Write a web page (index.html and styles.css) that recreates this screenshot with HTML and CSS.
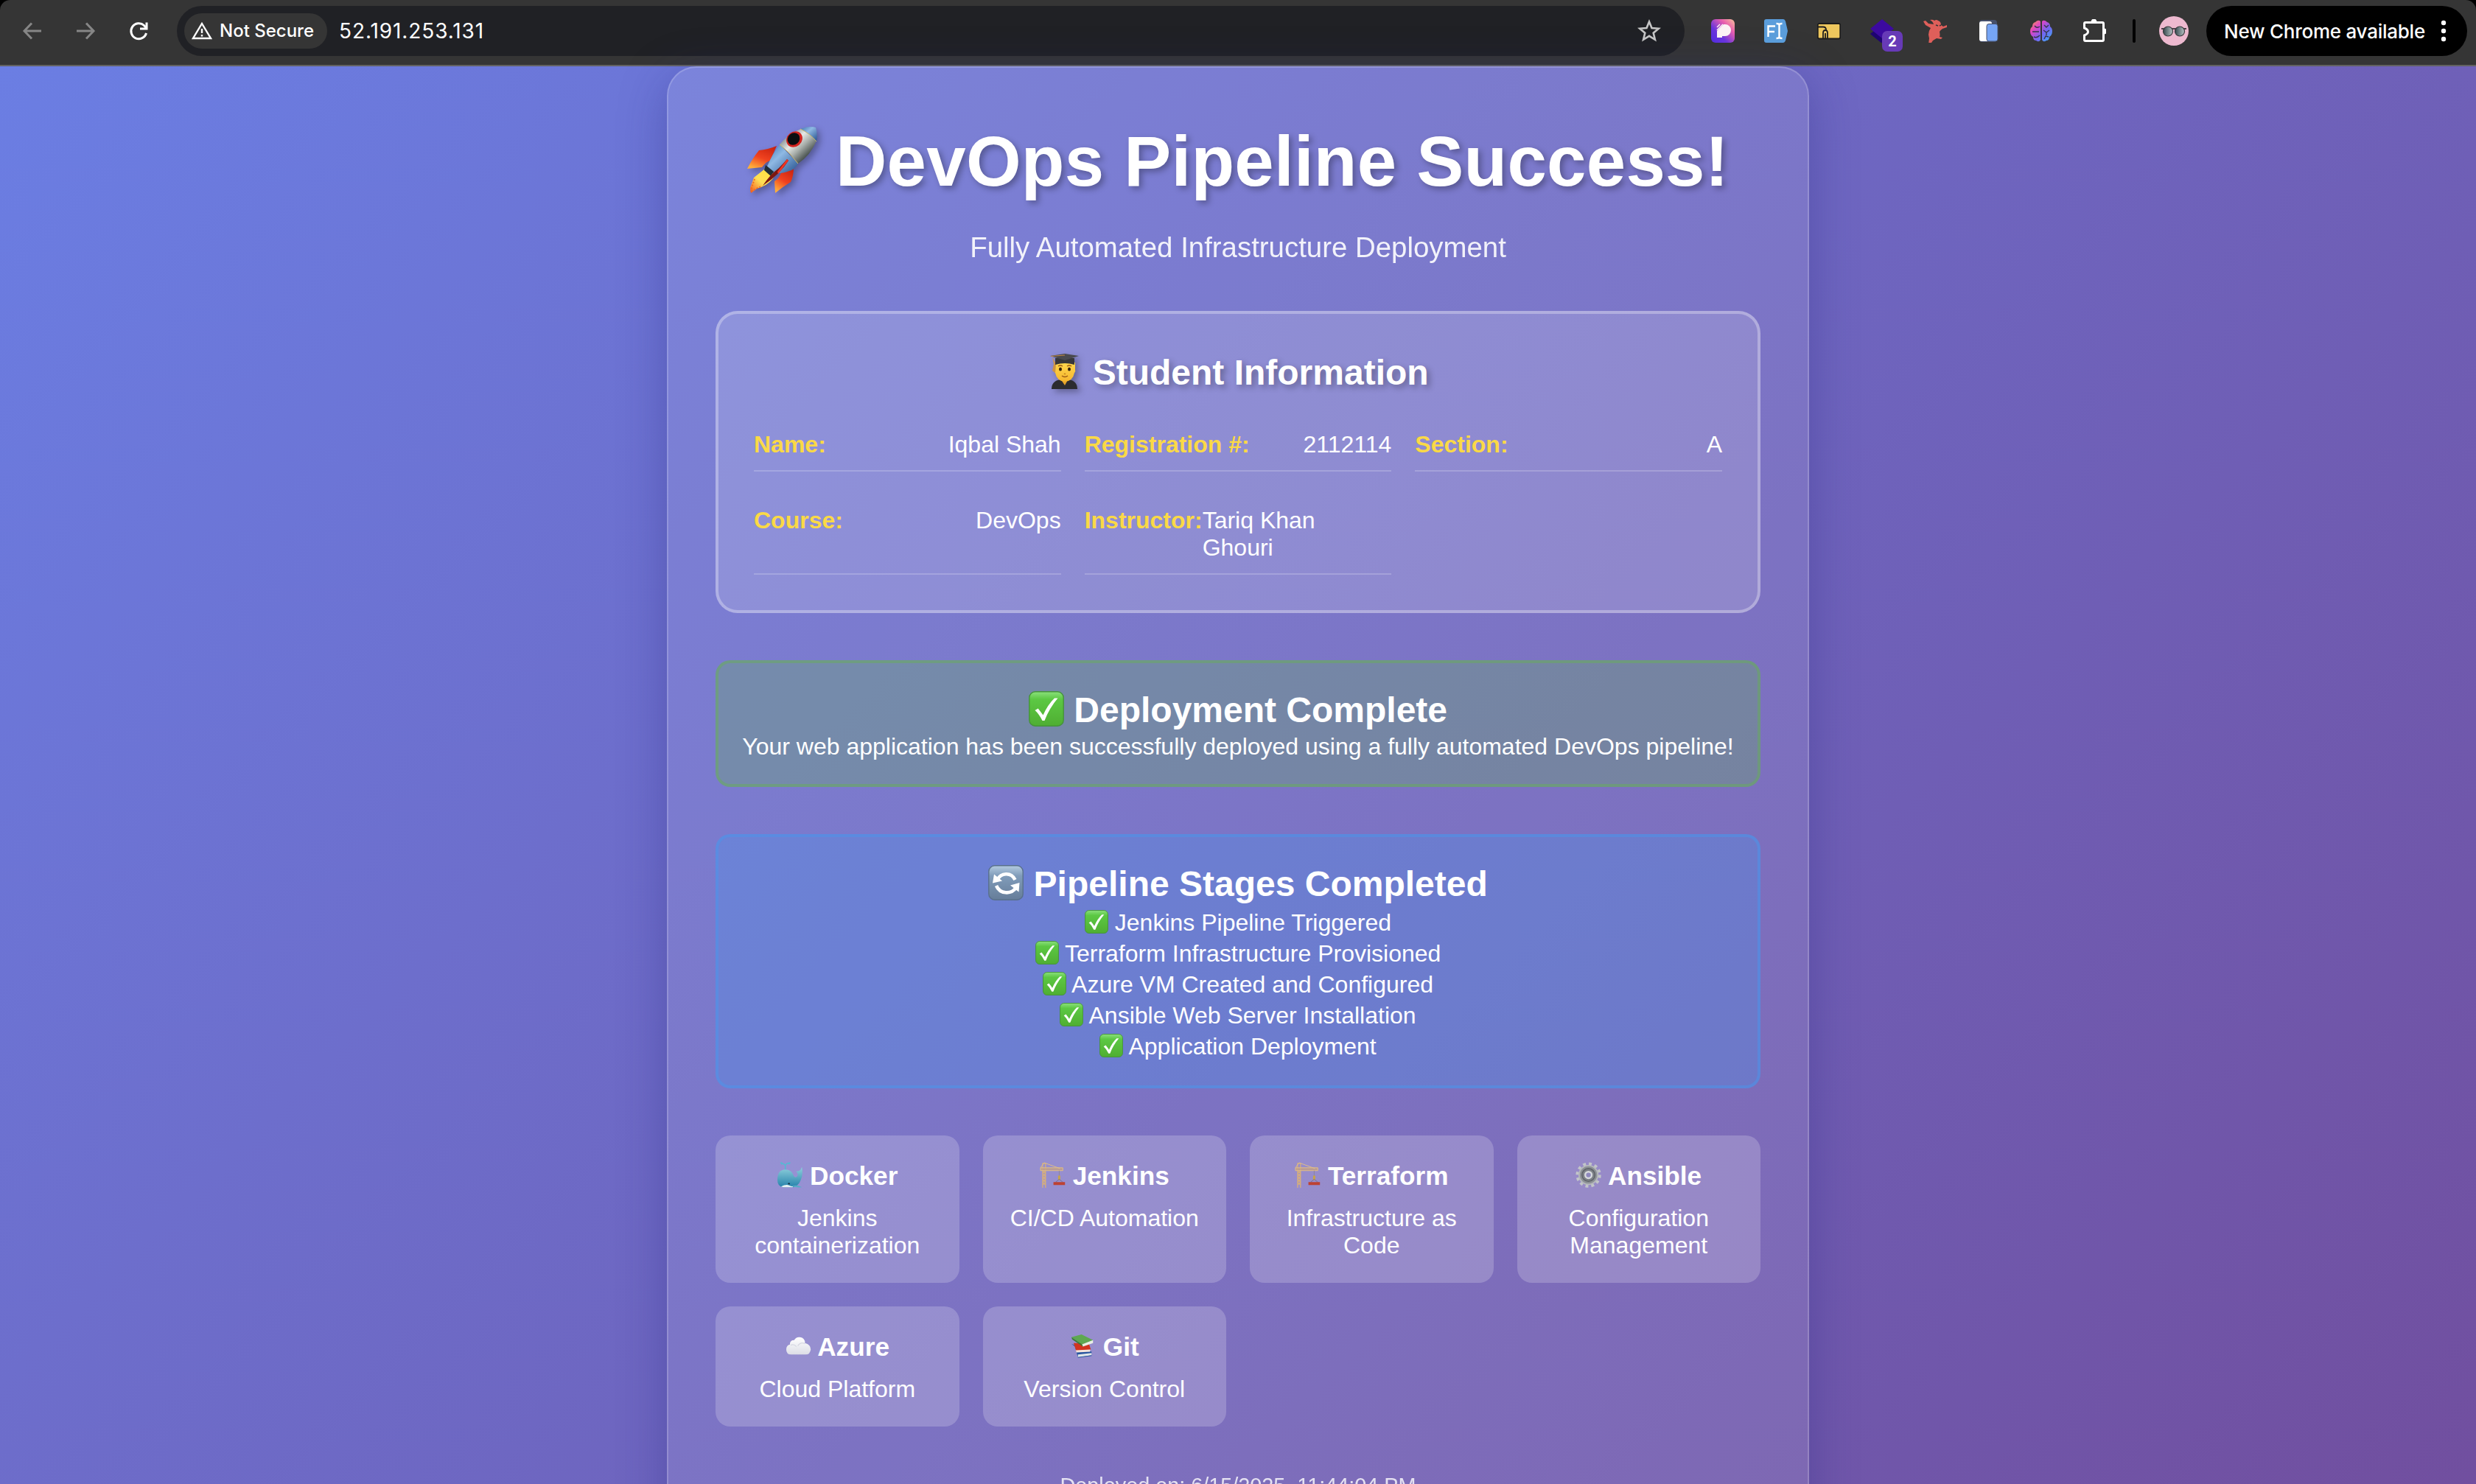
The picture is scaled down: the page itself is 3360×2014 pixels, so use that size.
FILE: index.html
```html
<!DOCTYPE html>
<html lang="en">
<head>
<meta charset="utf-8">
<title>DevOps Pipeline Success</title>
<link rel="stylesheet" href="styles.css">
</head>
<body>
<svg class="defs" aria-hidden="true">
  <defs>
    <linearGradient id="g-check" x1="0" y1="0" x2="0" y2="1"><stop offset="0" stop-color="#8be07c"/><stop offset=".22" stop-color="#5cc843"/><stop offset="1" stop-color="#4fae32"/></linearGradient>
    <linearGradient id="g-sync" x1="0" y1="0" x2="0" y2="1"><stop offset="0" stop-color="#b4cbe0"/><stop offset=".3" stop-color="#809cba"/><stop offset="1" stop-color="#667d99"/></linearGradient>
    <linearGradient id="g-hull" x1=".2" y1=".2" x2=".75" y2=".75"><stop offset="0" stop-color="#8e9699"/><stop offset=".35" stop-color="#e6e9e6"/><stop offset=".65" stop-color="#a9afab"/><stop offset="1" stop-color="#4e5754"/></linearGradient>
    <linearGradient id="g-blue" x1="0" y1="0" x2="1" y2="1"><stop offset="0" stop-color="#3a73ae"/><stop offset=".4" stop-color="#8fb9e4"/><stop offset="1" stop-color="#234f8c"/></linearGradient>
    <linearGradient id="g-fin" x1=".8" y1="0" x2=".3" y2="1"><stop offset="0" stop-color="#c8220f"/><stop offset=".55" stop-color="#f0421f"/><stop offset="1" stop-color="#ffae3a"/></linearGradient>
    <linearGradient id="g-flame" x1="1" y1="0" x2="0" y2="1"><stop offset="0" stop-color="#ffe23c"/><stop offset=".55" stop-color="#ffdf55"/><stop offset="1" stop-color="#f0501c"/></linearGradient>
    <linearGradient id="g-whale" x1="0" y1="0" x2="0" y2="1"><stop offset="0" stop-color="#8fd0dc"/><stop offset="1" stop-color="#2682ab"/></linearGradient>
    <linearGradient id="g-cloud" x1="0" y1="0" x2="0" y2="1"><stop offset="0" stop-color="#ffffff"/><stop offset="1" stop-color="#dcdde6"/></linearGradient>
    <linearGradient id="g-face" x1="0" y1="0" x2="0" y2="1"><stop offset="0" stop-color="#ffd84d"/><stop offset="1" stop-color="#f5b52e"/></linearGradient>
    <linearGradient id="g-p" x1="0" y1="1" x2="1" y2="0"><stop offset="0" stop-color="#4f2ce0"/><stop offset=".35" stop-color="#6a35dc"/><stop offset=".7" stop-color="#e95fae"/><stop offset="1" stop-color="#f7c39a"/></linearGradient>
    <linearGradient id="g-brain" x1="0" y1="0" x2="1" y2="1"><stop offset="0" stop-color="#f7a63c"/><stop offset=".3" stop-color="#e044c4"/><stop offset=".6" stop-color="#7464f0"/><stop offset="1" stop-color="#36b4f4"/></linearGradient>
    <linearGradient id="g-lens" x1="0" y1="0" x2="1" y2="0"><stop offset="0" stop-color="#33474c"/><stop offset="1" stop-color="#b9c4c6"/></linearGradient>

    <symbol id="check" viewBox="0 0 48 48">
      <rect x=".8" y=".8" width="46.4" height="46.4" rx="8" fill="url(#g-check)" stroke="#45933a" stroke-width="1.4"/>
      <path d="M8.500 26l4.200-2.600q4 5 6.800 9.200Q26 18 35 9.500h4.500Q28 23 21.500 40h-3Q14 31 8.500 26z" fill="#fff"/>
    </symbol>
    <symbol id="sync" viewBox="0 0 48 48">
      <rect x=".8" y=".8" width="46.4" height="46.4" rx="8" fill="url(#g-sync)" stroke="#59708c" stroke-width="1.4"/>
      <path d="M12.500 20C17 10.500 31 9 36.500 20M11 28c5 11.500 20 12.500 27 2.500" fill="none" stroke="#fff" stroke-width="4.600"/>
      <path d="M8 12.500L6 24.500l13-3zM42.500 24L30 27.500l11.500 9z" fill="#fff"/>
    </symbol>
    <symbol id="rocket" viewBox="0 0 96 96">
      <path d="M23 63L38 70Q32 82 19 87L13 89 5 95 4 88 9 74z" fill="url(#g-flame)"/>
      <path d="M10 76L6 88 5 94 12 89 19 86" fill="none" stroke="#f06a22" stroke-width="1.800" stroke-dasharray="2 2"/>
      <path d="M40 31Q28 36 16 37Q7 48 0 62L20 60Q26 52 31 51z" fill="url(#g-fin)"/>
      <path d="M63 60Q63 72 59 80Q49 86 38 95L37 79Q45 74 46 66z" fill="url(#g-fin)"/>
      <path d="M44 29L69 55Q65 63 57 65Q46 69 38 68L27 59Q34 42 44 29z" fill="url(#g-blue)"/>
      <path d="M25 57l11 9-4 6-9-8z" fill="#222d35"/>
      <path d="M44 29Q56 14 73 8Q83 8 94 24Q86 44 69 55Q58 41 44 29z" fill="url(#g-hull)"/>
      <path d="M72 8Q84 3 93 6Q96 15 94 25Q85 14 72 8z" fill="url(#g-blue)"/>
      <path d="M44 29Q57 39 69 55M72 8Q85 14 94 25" fill="none" stroke="#c9b56a" stroke-width="1"/>
      <ellipse cx="64" cy="22" rx="11.500" ry="10" transform="rotate(-40 64 22)" fill="#d2231f"/>
      <ellipse cx="63" cy="21.500" rx="8.800" ry="7.800" transform="rotate(-40 63 21.500)" fill="#0a0d10"/>
      <path d="M54 49L56 51Q44 70 21 85Q31 70 43 61Q49 55 54 49z" fill="#7d160f"/>
      <path d="M54 49L56 51 42 69 41 66z" fill="#f03524"/>
    </symbol>
    <symbol id="student" viewBox="0 0 48 48">
      <path d="M6 48q0-11 12-13h11q12 2 12 13z" fill="#2c2c30"/>
      <path d="M18 34h11l-5 9z" fill="#e5a42b"/>
      <path d="M9 12h29v10q1 2-1 4-2 11-13 12-11-1-13-12-3-2-2-5z" fill="url(#g-face)"/>
      <path d="M7 4l2 10-2 9 4 3 1-12z" fill="#cc9347"/>
      <path d="M11 6h26v9q-13-4-26 0z" fill="#37373b"/>
      <path d="M4 3L24 0l19 3-19 6z" fill="#4a4a4e"/>
      <path d="M5 3.500L24 2" stroke="#bf8745" stroke-width="1.200"/>
      <ellipse cx="18" cy="21" rx="2" ry="2.600" fill="#33200c"/><ellipse cx="30" cy="21" rx="2" ry="2.600" fill="#33200c"/>
      <path d="M15 17q3-2 6 0M27 17q3-2 6 0M20 30q4 3 8 0" fill="none" stroke="#9b5a15" stroke-width="1.400"/>
      <path d="M23 27q1 1 2 0" fill="none" stroke="#c07a1a" stroke-width="1.500"/>
    </symbol>
    <symbol id="whale" viewBox="0 0 36 36">
      <path d="M12 11V5M12 5Q10 1 6 3M12 5Q14 0 18 3M8 1.500l-3-.5M16 1.500l3-.5" fill="none" stroke="#55b9d2" stroke-width="1.600"/>
      <path d="M1 25Q1 10.500 12 10.500Q21 10.500 24 20Q27 23 29 19Q30 16 27 13Q31 13 33 11Q34 9 35 7Q37 19 33 26Q30 33 23 35H9Q1 34 1 25z" fill="url(#g-whale)"/>
      <path d="M6 34Q12 31 16 32Q20 34 23 34L22 35H9z" fill="#e6f1f2"/>
      <path d="M21 33.500q7-2.500 14 1.500-8 1-14-1.500z" fill="#56acc8"/><circle cx="17" cy="30" r="1.200" fill="#142d3b"/>
    </symbol>
    <symbol id="crane" viewBox="0 0 36 36">
      <path d="M4 36V2h4v34M4 12l4 4-4 4 4 4-4 4 4 4M8 12l-4 4 4 4-4 4 4 4-4 4" fill="none" stroke="#d6ae7c" stroke-width="1.300"/>
      <path d="M1 8h31v4H1zM6 1L1 8M6 1l22 8" fill="#c9a27c" fill-opacity=".7" stroke="#e0bd86" stroke-width="1"/>
      <path d="M27 12v11" stroke="#8d8798" stroke-width="1"/><path d="M25.500 19h3v6h-3z" fill="#c8a447"/>
      <path d="M22 28l5-4 5 4" fill="none" stroke="#77708c"/><path d="M19 28h16v4H19z" fill="#bd4233"/>
    </symbol>
    <symbol id="gear" viewBox="0 0 36 36">
      <circle cx="18" cy="18" r="15.300" fill="none" stroke="#c2c5c9" stroke-width="4.500" stroke-dasharray="4 4.010"/>
      <circle cx="18" cy="18" r="13" fill="#8c9095" stroke="#b5b8bc" stroke-width="2"/>
      <circle cx="18" cy="18" r="9" fill="#7c8086" stroke="#5e6268" stroke-width="1.500"/>
      <circle cx="18" cy="18" r="4.500" fill="#8e88bd" stroke="#d6d9dc" stroke-width="2.500"/>
    </symbol>
    <symbol id="cloud" viewBox="0 0 36 36">
      <path d="M8 30Q1 30 1 23Q1 17 6 16Q6 10 12 10Q15 5 20 6Q27 7 27 14Q35 16 35 23Q34 30 28 30z" fill="url(#g-cloud)"/>
      <path d="M7 17q5-2 8 2M17 18q4-6 10-3" fill="none" stroke="#d6d8e2" stroke-width="1.200"/>
    </symbol>
    <symbol id="books" viewBox="0 0 36 36">
      <path d="M2 15l5 4 4 15 19-3v-5z" fill="#27559f"/><path d="M11 30l19-2v3l-19 3z" fill="#dfe6e8"/><path d="M11 34l19-2.500" stroke="#27559f"/>
      <path d="M5 14l21 0 3 9-20 3z" fill="#d23420"/><path d="M8 24l20-1v3l-19 1z" fill="#f2e4dc"/>
      <path d="M2 6l14-4 16 8-15 6z" fill="#5ea851"/><path d="M16 16l16-6v4l-14 5z" fill="#e9efe5"/><path d="M2 6l15 10 1 3L3 9z" fill="#397c33"/>
    </symbol>
  </defs>
</svg>

<header class="toolbar">
  <nav class="nav">
    <svg class="nav-icon dim" viewBox="0 0 36 36"><path d="M30 18H8M17 7.500L7 18l10 10.500"/></svg>
    <svg class="nav-icon dim" viewBox="0 0 36 36"><path d="M6 18h22M19 7.500L29 18 19 28.500"/></svg>
    <svg class="nav-icon" viewBox="0 0 36 36"><path d="M28.500 21A10.500 10.500 0 1 1 25.500 10.500L28.500 14"/><path d="M29 6.500V15h-9"/></svg>
  </nav>
  <div class="omnibox">
    <div class="chip">
      <svg class="warn" viewBox="0 0 28 26"><path d="M14 3L26 23H2z" fill="none" stroke="#fff" stroke-width="2.400"/><path d="M14 10v6M14 18v2.600" stroke="#fff" stroke-width="2.400"/></svg>
      <span>Not Secure</span>
    </div>
    <span class="url">52.191.253.131</span>
    <svg class="star" viewBox="0 0 32 32"><path d="M16 3.500l3.500 8.600 9.300.7-7.100 6 2.200 9-7.900-4.900-7.900 4.900 2.200-9-7.100-6 9.300-.7z" fill="none" stroke="#c7c7c7" stroke-width="2.600"/></svg>
  </div>
  <div class="extensions">
    <div class="ext"><svg viewBox="0 0 32 32"><rect width="32" height="32" rx="6" fill="url(#g-p)"/><path d="M8 16L17 7h2a8 8 0 0 1 0 16h-4v2H8z" fill="#fbf3f5"/><path d="M8 11l4-4M8 15l8-8" stroke="#fbf3f5" stroke-width="1.500"/></svg></div>
    <div class="ext"><svg viewBox="0 0 32 32"><path d="M3 0h23q2 0 3 3l3 13-3 13q-1 3-3 3H3q-3 0-3-3V3q0-3 3-3z" fill="#5a9ddb"/><path d="M5.500 24V9.500H15M5.500 17H14M20.500 8v16M16.500 6q4 0 4 2 0-2 4-2M16.500 26q4 0 4-2 0 2 4 2" fill="none" stroke="#fff" stroke-width="2.400"/></svg></div>
    <div class="ext"><svg viewBox="0 0 32 32"><rect x=".8" y="6" width="30.400" height="20.500" rx="2" fill="#eec75d" stroke="#1d1d1d" stroke-width="1.800"/><path d="M1 10.500h7q4 0 4 4M8 26v-7q0-4 3-4t3 4v7M11 19v7" fill="none" stroke="#1d1d1d" stroke-width="1.800"/></svg></div>
    <div class="ext"><svg viewBox="0 0 32 32"><path d="M0 20l5-4 17 13-6 4z" fill="#1e0470"/><path d="M16 0l16 13-16 13L0 13z" fill="#3c0aa0"/></svg><span class="badge">2</span></div>
    <div class="ext"><svg viewBox="0 0 32 32"><path d="M0 3l3-1 4 4 7 1q-1-4-5-6 4-1 6 1 3-2 5 0 4 1 4 6l3 2 5-2v3l-6 2q-3 2-4 4 1 5 0 7l4 1-2 2-6-1-5 3-4 6-2-1 1-8-1-5q0-5 3-9L3 8z" fill="#df5f5a"/><path d="M17 8l3 1M22 9l2-1" stroke="#353535" stroke-width="1.600"/></svg></div>
    <div class="ext"><svg viewBox="0 0 32 32"><rect x="4" y="1" width="24" height="30" rx="4" fill="#46506b"/><rect x="4" y="3" width="17" height="27" rx="3" fill="#fff"/><rect x="14" y="6.500" width="15" height="23.500" rx="3" fill="#76a5f5" stroke="#46506b" stroke-width="1"/></svg></div>
    <div class="ext"><svg viewBox="0 0 32 32"><path d="M15 3v25q-2 4-6 1-4 0-4-5-4-2-4-8 0-4 3-6 0-5 4-6 4-4 7-1zM17 3v25q2 4 6 1 4 0 4-5 4-2 4-8 0-4-3-6 0-5-4-6-4-4-7-1z" fill="url(#g-brain)"/><path d="M7 9q3 4 7 1M4 17h9M6 24q4 2 8-2M20 8l3 3 3-3M19 15l4 3v4M23 18l4-3M20 27l2-4 4 1" fill="none" stroke="#34354a" stroke-width="1.400"/></svg></div>
    <div class="ext"><svg viewBox="0 0 32 32"><path d="M4 5.500h23q1.500 0 1.500 1.500v22q0 1.500-1.500 1.500H4Q2.500 30.500 2.500 29v-6q5-2 5-5t-5-5V7Q2.500 5.500 4 5.500z" transform="translate(0 -1)" fill="none" stroke="#fff" stroke-width="3"/><path d="M11.500 4a4 4.500 0 0 1 8 0zM29 12.500a4.500 4 0 0 1 0 8z" fill="#fff"/></svg></div>
  </div>
  <span class="divider"></span>
  <svg class="avatar" viewBox="0 0 40 40"><circle cx="20" cy="20" r="20" fill="#edb9cf"/><path d="M3 17h34" stroke="#1d1d20" stroke-width="1.500"/><circle cx="12" cy="20.500" r="6.500" fill="url(#g-lens)" stroke="#3a3a3e" stroke-width="1.200"/><circle cx="28" cy="20.500" r="6.500" fill="url(#g-lens)" stroke="#3a3a3e" stroke-width="1.200"/></svg>
  <div class="update"><span>New Chrome available</span><svg class="dots" viewBox="0 0 8 30"><circle cx="4" cy="4" r="3.200"/><circle cx="4" cy="15" r="3.200"/><circle cx="4" cy="26" r="3.200"/></svg></div>
</header>

<main class="page">
  <div class="container">
    <h1 class="title"><svg class="emoji"><use href="#rocket"/></svg> DevOps Pipeline Success!</h1>
    <p class="subtitle">Fully Automated Infrastructure Deployment</p>

    <section class="student">
      <h2 class="heading shadowed"><svg class="emoji"><use href="#student"/></svg> Student Information</h2>
      <div class="info-grid">
        <div class="info"><span class="label">Name:</span><span>Iqbal Shah</span></div>
        <div class="info"><span class="label">Registration #:</span><span>2112114</span></div>
        <div class="info"><span class="label">Section:</span><span>A</span></div>
        <div class="info"><span class="label">Course:</span><span>DevOps</span></div>
        <div class="info"><span class="label">Instructor:</span><span>Tariq Khan Ghouri</span></div>
      </div>
    </section>

    <section class="notice success">
      <h2 class="heading"><svg class="emoji"><use href="#check"/></svg> Deployment Complete</h2>
      <p>Your web application has been successfully deployed using a fully automated DevOps pipeline!</p>
    </section>

    <section class="notice stages">
      <h2 class="heading"><svg class="emoji"><use href="#sync"/></svg> Pipeline Stages Completed</h2>
      <ul class="stage-list">
        <li><svg class="emoji"><use href="#check"/></svg> Jenkins Pipeline Triggered</li>
        <li><svg class="emoji"><use href="#check"/></svg> Terraform Infrastructure Provisioned</li>
        <li><svg class="emoji"><use href="#check"/></svg> Azure VM Created and Configured</li>
        <li><svg class="emoji"><use href="#check"/></svg> Ansible Web Server Installation</li>
        <li><svg class="emoji"><use href="#check"/></svg> Application Deployment</li>
      </ul>
    </section>

    <section class="tools">
      <div class="tool"><h3><svg class="emoji"><use href="#whale"/></svg> Docker</h3><p>Jenkins containerization</p></div>
      <div class="tool"><h3><svg class="emoji"><use href="#crane"/></svg> Jenkins</h3><p>CI/CD Automation</p></div>
      <div class="tool"><h3><svg class="emoji"><use href="#crane"/></svg> Terraform</h3><p>Infrastructure as Code</p></div>
      <div class="tool"><h3><svg class="emoji"><use href="#gear"/></svg> Ansible</h3><p>Configuration Management</p></div>
      <div class="tool"><h3><svg class="emoji"><use href="#cloud"/></svg> Azure</h3><p>Cloud Platform</p></div>
      <div class="tool"><h3><svg class="emoji"><use href="#books"/></svg> Git</h3><p>Version Control</p></div>
    </section>

    <footer class="deployed">Deployed on: 6/15/2025, 11:44:04 PM</footer>
  </div>
</main>
</body>
</html>
```
FILE: styles.css
```css
* { box-sizing: border-box; margin: 0; padding: 0; }

html { height: 100%; overflow: hidden; }

body {
  height: 2014px;
  overflow: hidden;
  background: #000;
  color: #fff;
  font-family: "Liberation Sans", Arial, sans-serif;
  font-size: 32px;
  line-height: 37px;
}

.defs { position: absolute; width: 0; height: 0; }

/* Browser toolbar */
.toolbar {
  display: flex;
  align-items: center;
  height: 90px;
  padding: 0 12px 4px 26px;
  background: #353535;
  border-bottom: 2px solid #626262;
  border-radius: 14px 14px 0 0;
  font-family: Inter, sans-serif;
  font-weight: 500;
}
.nav { display: flex; gap: 36px; margin-right: 34px; }
.nav-icon { width: 36px; height: 36px; fill: none; stroke: #fff; stroke-width: 3; }
.nav-icon.dim { stroke: #868686; }
.omnibox {
  display: flex;
  align-items: center;
  width: 2046px;
  height: 68px;
  padding: 0 32px 0 10px;
  border-radius: 34px;
  background: #202125;
}
.chip {
  display: flex;
  align-items: center;
  gap: 10px;
  width: 194px;
  height: 48px;
  padding-left: 10px;
  border-radius: 24px;
  background: #353535;
  font-size: 24px;
  line-height: 30px;
  white-space: nowrap;
}
.warn { width: 28px; height: 26px; flex: none; }
.url { flex: 1; padding-left: 16px; font-size: 28px; font-weight: 400; letter-spacing: .9px; }
.star { width: 32px; height: 32px; }
.extensions { display: flex; margin-left: 16px; }
.ext {
  position: relative;
  display: flex;
  justify-content: center;
  width: 72px;
}
.ext svg { width: 32px; height: 32px; }
.badge {
  position: absolute;
  left: 36px;
  top: 16px;
  width: 28px;
  height: 28px;
  border-radius: 7px;
  background: #673ab7;
  font: 700 20px/28px Roboto, sans-serif;
  text-align: center;
}
.divider { width: 4px; height: 32px; margin: 0 32px 0 16px; border-radius: 2px; background: #000; }
.avatar { width: 40px; height: 40px; margin-right: 24px; }
.update {
  display: flex;
  align-items: center;
  justify-content: space-between;
  width: 354px;
  height: 68px;
  padding: 0 28px 0 24px;
  border-radius: 34px;
  background: #000;
  font-size: 26px;
  letter-spacing: -.25px;
  white-space: nowrap;
}
.dots { width: 8px; height: 30px; fill: #fff; }

/* Page */
.page {
  display: flex;
  justify-content: center;
  height: 2009px;
  background: linear-gradient(135deg, #6b7ee3 0%, #714e9e 100%);
}
.container {
  width: 1550px;
  padding: 64px;
  border: 2px solid rgba(255, 255, 255, .18);
  border-radius: 40px;
  background: rgba(255, 255, 255, .1);
  box-shadow: 0 16px 64px rgba(38, 40, 130, .37);
  text-align: center;
}
.emoji {
  display: inline-block;
  width: 1em;
  height: 1em;
  vertical-align: -.115em;
}
.title {
  margin: 0 -8px 32px;
  font-size: 96px;
  line-height: 126px;
  letter-spacing: .25px;
  white-space: nowrap;
  text-shadow: 4px 4px 8px rgba(0, 0, 0, .3);
}
.title .emoji { margin-right: -3px; }
.title .emoji, .shadowed .emoji { filter: drop-shadow(4px 4px 4px rgba(0, 0, 0, .3)); }
.subtitle { margin-bottom: 64px; font-size: 38.4px; line-height: 44px; opacity: .9; }
.heading { font-size: 48px; line-height: 63px; }
.shadowed { margin-bottom: 32px; text-shadow: 4px 4px 8px rgba(0, 0, 0, .3); }

.student {
  padding: 48px;
  border: 4px solid rgba(255, 255, 255, .3);
  border-radius: 30px;
  background: rgba(255, 255, 255, .15);
}
.info-grid { display: grid; grid-template-columns: repeat(3, 1fr); gap: 32px; }
.info {
  display: flex;
  justify-content: space-between;
  padding: 16px 0;
  border-bottom: 2px solid rgba(255, 255, 255, .2);
  text-align: left;
}
.label { color: #fad946; font-weight: 700; }

.notice { margin-top: 64px; padding: 32px; border: 4px solid; border-radius: 20px; white-space: nowrap; }
.success { border-color: rgba(104, 174, 90, .5); background: rgba(104, 174, 90, .3); }
.success p { margin: 0 -32px; }
.stages { border-color: rgba(73, 149, 236, .5); background: rgba(73, 149, 236, .3); }
.stage-list { list-style: none; line-height: 42px; }

.tools { display: grid; grid-template-columns: repeat(4, 1fr); gap: 32px; margin-top: 64px; }
.tool { padding: 32px; border-radius: 20px; background: rgba(255, 255, 255, .2); }
.tool h3 { margin-bottom: 16px; font-size: 35.2px; line-height: 46px; }

.deployed { margin-top: 64px; font-size: 28.8px; line-height: 33px; opacity: .8; }
```
